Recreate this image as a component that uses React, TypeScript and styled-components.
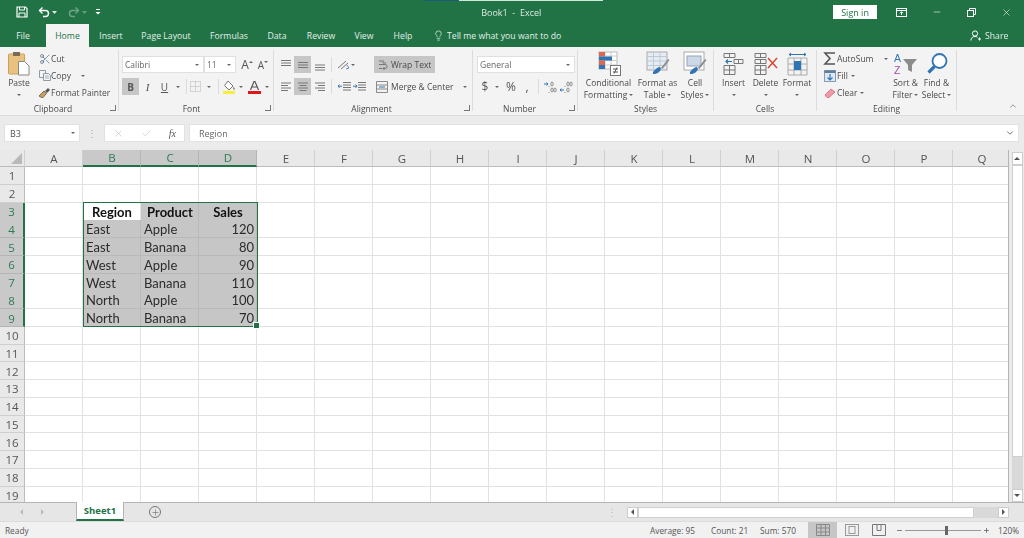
import React from 'react';
import styled, { createGlobalStyle } from 'styled-components';
import { Check, ChevronDown, ChevronUp, Lightbulb, Minus, Plus, Scissors, X } from 'lucide-react';

const GREEN = '#217346';
const INK = '#4a4a4a';
const COLUMNS = 'ABCDEFGHIJKLMNOPQ'.split('');
const ROWS = Array.from({ length: 19 }, (_, i) => i + 1);
const ROW_H = 17.75;

const CELLS: Record<number, [string, string, string]> = {
  3: ['Region', 'Product', 'Sales'],
  4: ['East', 'Apple', '120'],
  5: ['East', 'Banana', '80'],
  6: ['West', 'Apple', '90'],
  7: ['West', 'Banana', '110'],
  8: ['North', 'Apple', '100'],
  9: ['North', 'Banana', '70'],
};

const Global = createGlobalStyle`
  html, body { margin: 0; padding: 0; background: #e9e9e9; }
  body { font-family: "Open Sans", "Liberation Sans", sans-serif; overflow: hidden; }
  * { box-sizing: border-box; }
`;

const Window = styled.div`
  width: 1024px;
  height: 538px;
  display: flex;
  flex-direction: column;
  position: relative;
  overflow: hidden;
  filter: blur(0.45px);
`;

/* title bar */
const TitleBar = styled.header`
  height: 24px;
  background: ${GREEN};
  color: #fff;
  display: flex;
  align-items: center;
  padding-left: 15px;
  position: relative;
  flex: none;
`;
const LoadStrip = styled.i`
  position: absolute;
  left: 423px;
  top: 0;
  width: 180px;
  height: 1px;
  background: linear-gradient(90deg, #1d5d78 0 20%, #cfe8da 20%);
`;
const QuickSlot = styled.span<{ $w: number; $dim?: boolean }>`
  width: ${p => p.$w}px;
  height: 24px;
  display: inline-flex;
  align-items: center;
  justify-content: center;
  opacity: ${p => (p.$dim ? 0.35 : 1)};
`;
const QuickBar = styled.div`
  display: flex;
  align-items: center;
  width: 407px;
`;
const DocTitle = styled.div`
  width: 180px;
  text-align: center;
  font-size: 9px;
  color: #dcebe3;
`;
const SignIn = styled.button`
  margin-left: 232px;
  width: 44px;
  height: 14px;
  border: 0;
  padding: 0;
  background: #fff;
  color: ${GREEN};
  font: 9px "Open Sans", sans-serif;
`;
const WinControls = styled.div`
  display: flex;
  margin-left: 7px;
`;
const WinSlot = styled.span`
  width: 35px;
  height: 24px;
  display: inline-flex;
  align-items: center;
  justify-content: center;
`;

/* tabs */
const TabBar = styled.nav`
  height: 23px;
  background: ${GREEN};
  display: flex;
  align-items: stretch;
  flex: none;
`;
const Tab = styled.span<{ $w: number; $on?: boolean }>`
  width: ${p => p.$w}px;
  flex: none;
  display: inline-flex;
  align-items: center;
  justify-content: center;
  font-size: 8.7px;
  color: ${p => (p.$on ? GREEN : '#e4efe9')};
  background: ${p => (p.$on ? '#f3f3f3' : 'transparent')};
`;
const TellMe = styled.span`
  width: 537px;
  flex: none;
  display: inline-flex;
  align-items: center;
  gap: 3px;
  font-size: 8.7px;
  color: #e4efe9;
`;
const Share = styled.span`
  display: inline-flex;
  align-items: center;
  gap: 4px;
  font-size: 8.7px;
  color: #e4efe9;
`;

/* ribbon */
const Ribbon = styled.section`
  height: 69px;
  background: #f3f3f3;
  display: flex;
  flex: none;
  border-bottom: 1px solid #dcdcdc;
  position: relative;
`;
const GroupBox = styled.div<{ $w: number }>`
  width: ${p => p.$w}px;
  flex: none;
  display: flex;
  flex-direction: column;
  position: relative;
  &::after {
    content: '';
    position: absolute;
    right: 0;
    top: 3px;
    bottom: 4px;
    width: 1px;
    background: #dcdcdc;
  }
`;
const GroupBody = styled.div<{ $pad?: number; $col?: boolean; $top?: number }>`
  height: 55px;
  display: flex;
  flex-direction: ${p => (p.$col ? 'column' : 'row')};
  padding: ${p => p.$top ?? 3}px 0 0 ${p => p.$pad ?? 0}px;
  gap: ${p => (p.$col ? 5 : 0)}px;
`;
const GroupLabel = styled.div<{ $shift?: number }>`
  height: 13px;
  font-size: 8.5px;
  line-height: 13px;
  text-align: center;
  color: ${INK};
  padding-right: ${p => p.$shift ?? 1}px;
`;
const Launcher = styled.i`
  position: absolute;
  right: 3px;
  bottom: 4px;
  width: 6px;
  height: 6px;
  border-right: 1px solid #777;
  border-bottom: 1px solid #777;
`;
const ToolRow = styled.div`
  display: flex;
  align-items: center;
  height: 17px;
`;
const Slot = styled.span<{ $w: number; $on?: boolean; $text?: number; $lead?: number; $gap?: number }>`
  width: ${p => p.$w}px;
  height: 17px;
  flex: none;
  display: inline-flex;
  align-items: center;
  justify-content: ${p => (p.$lead !== undefined ? 'flex-start' : 'center')};
  padding-left: ${p => p.$lead ?? 0}px;
  gap: ${p => p.$gap ?? 0}px;
  background: ${p => (p.$on ? '#c6c6c6' : 'transparent')};
  color: ${p => (p.$lead !== undefined ? INK : '#555')};
  font-size: ${p => p.$text ?? 12}px;
  white-space: nowrap;
`;
const Divider = styled.i<{ $mx: number }>`
  width: 1px;
  height: 15px;
  background: #dcdcdc;
  margin: 0 ${p => p.$mx}px;
  flex: none;
`;
const Caret = styled.i<{ $up?: boolean; $rise?: number; $ml?: number }>`
  width: 0;
  height: 0;
  flex: none;
  border-left: 2.5px solid transparent;
  border-right: 2.5px solid transparent;
  border-top: 2.5px solid #666;
  display: inline-block;
  transform: ${p => (p.$up ? 'rotate(180deg)' : 'none')};
  margin-bottom: ${p => p.$rise ?? 0}px;
  margin-left: ${p => p.$ml ?? 0}px;
`;
const Combo = styled.div<{ $w: number }>`
  width: ${p => p.$w}px;
  height: 17px;
  flex: none;
  background: #fff;
  border: 1px solid #e0e0e0;
  font-size: 8.5px;
  color: #666;
  padding: 0 4px 0 2px;
  display: flex;
  align-items: center;
  justify-content: space-between;
`;
const SmallColumn = styled.div<{ $w?: number }>`
  display: flex;
  flex-direction: column;
  width: ${p => (p.$w ? `${p.$w}px` : 'auto')};
`;
const SmallTool = styled.div`
  height: 17px;
  display: flex;
  align-items: center;
  font-size: 8.5px;
  color: ${INK};
  white-space: nowrap;
`;
const SmallIcon = styled.span<{ $w: number }>`
  width: ${p => p.$w}px;
  flex: none;
  display: inline-flex;
  justify-content: center;
  align-items: center;
`;
const SmallText = styled.span<{ $w?: number }>`
  width: ${p => (p.$w ? `${p.$w}px` : 'auto')};
  margin-right: 3px;
  flex: none;
`;
const LargeTool = styled.div<{ $w: number }>`
  width: ${p => p.$w}px;
  flex: none;
  display: flex;
  flex-direction: column;
  align-items: center;
  font-size: 8.5px;
  line-height: 12px;
  color: ${INK};
  white-space: nowrap;
`;
const LargeIcon = styled.div`
  height: 27px;
  display: flex;
  align-items: center;
  justify-content: center;
`;
const LargeLine = styled.div`
  height: 12px;
  display: flex;
  align-items: center;
  justify-content: center;
  gap: 2px;
`;
const CollapseSlot = styled.span`
  margin-left: auto;
  width: 23px;
  display: flex;
  justify-content: center;
  align-items: flex-end;
  padding-bottom: 4px;
`;
const BoldMark = styled.span`
  font-weight: 700;
  font-size: 10px;
`;
const ItalicMark = styled.span`
  font: italic 11px "Liberation Serif", serif;
`;
const UnderMark = styled.span`
  font-size: 10px;
  text-decoration: underline;
`;

/* formula bar */
const FormulaBar = styled.div`
  height: 34px;
  background: #ebebeb;
  padding: 8px 5px 8px 4px;
  display: flex;
  align-items: stretch;
  flex: none;
`;
const NameBox = styled.div`
  width: 76px;
  background: #fff;
  border: 1px solid #e2e2e2;
  font-size: 9px;
  color: #555;
  padding: 0 4px 0 5px;
  display: flex;
  align-items: center;
  justify-content: space-between;
`;
const Grip = styled.i`
  width: 24px;
  display: flex;
  align-items: center;
  justify-content: center;
  color: #aaa;
  font: normal 10px "Open Sans", sans-serif;
`;
const FxButtons = styled.div`
  width: 81px;
  background: #fff;
  border: 1px solid #e2e2e2;
  display: flex;
  align-items: center;
  justify-content: space-between;
  padding: 0 8px;
`;
const Fx = styled.span`
  font: italic 10px "Liberation Serif", serif;
  color: #555;
`;
const FormulaInput = styled.div`
  flex: 1;
  margin-left: 4px;
  background: #fff;
  border: 1px solid #e2e2e2;
  font-size: 9px;
  color: #666;
  padding: 0 3px 0 9px;
  display: flex;
  align-items: center;
  justify-content: space-between;
`;

/* sheet */
const SheetArea = styled.main`
  height: 352px;
  display: flex;
  flex: none;
  background: #ebebeb;
`;
const Grid = styled.div`
  width: 1009px;
  height: 352px;
  overflow: hidden;
  position: relative;
  flex: none;
  border-right: 1px solid #b4b4b4;
`;
const HeaderRow = styled.div`
  display: grid;
  grid-template-columns: 25px repeat(17, 58px);
  height: 17px;
`;
const Corner = styled.div`
  background: #e9e9e9;
  border-right: 1px solid #cfcfcf;
  border-bottom: 1px solid #bcbcbc;
  position: relative;
  &::after {
    content: '';
    position: absolute;
    right: 2px;
    bottom: 2px;
    border-left: 11px solid transparent;
    border-bottom: 11px solid #b9b9b9;
  }
`;
const ColHead = styled.div<{ $on: boolean }>`
  display: flex;
  align-items: center;
  justify-content: center;
  padding-left: 1px;
  font-size: 11.5px;
  background: ${p => (p.$on ? '#c9c9c9' : '#e9e9e9')};
  color: ${p => (p.$on ? '#2f7a54' : '#555')};
  border-right: 1px solid ${p => (p.$on ? '#b5b5b5' : '#cfcfcf')};
  border-bottom: ${p => (p.$on ? `2px solid ${GREEN}` : '1px solid #bcbcbc')};
`;
const Row = styled.div`
  display: grid;
  grid-template-columns: 25px repeat(17, 58px);
  height: ${ROW_H}px;
`;
const RowHead = styled.div<{ $on: boolean }>`
  display: flex;
  align-items: center;
  justify-content: center;
  padding-top: 1px;
  font-size: 11.5px;
  background: ${p => (p.$on ? '#c9c9c9' : '#e9e9e9')};
  color: ${p => (p.$on ? '#2f7a54' : '#555')};
  border-bottom: 1px solid ${p => (p.$on ? '#b5b5b5' : '#cfcfcf')};
  border-right: ${p => (p.$on ? `2px solid ${GREEN}` : '1px solid #bcbcbc')};
`;
const Cell = styled.div<{ $sel?: boolean; $bold?: boolean; $align?: string }>`
  background: ${p => (p.$sel ? '#c6c6c6' : '#fff')};
  border-right: 1px solid ${p => (p.$sel ? '#b9b9b9' : '#e2e2e2')};
  border-bottom: 1px solid ${p => (p.$sel ? '#b9b9b9' : '#e2e2e2')};
  font: ${p => (p.$bold ? 700 : 400)} 13px "Lato", "Open Sans", sans-serif;
  color: ${p => (p.$bold ? '#111' : '#2b2b2b')};
  display: flex;
  align-items: center;
  justify-content: ${p => p.$align ?? 'flex-start'};
  padding: 1px 2px 0 3px;
  white-space: nowrap;
`;
const Selection = styled.div`
  position: absolute;
  left: 83px;
  top: ${17 + 2 * ROW_H - 0.5}px;
  width: 175px;
  height: ${7 * ROW_H + 1}px;
  border: 1.5px solid ${GREEN};
  pointer-events: none;
  &::after {
    content: '';
    position: absolute;
    right: -3px;
    bottom: -3px;
    width: 5px;
    height: 5px;
    background: ${GREEN};
    border: 1px solid #fff;
  }
`;
const VScroll = styled.aside`
  flex: 1;
  display: flex;
  flex-direction: column;
  align-items: center;
  padding: 2px 0 0 1px;
`;
const ScrollBtn = styled.div`
  width: 11px;
  height: 13px;
  background: #fff;
  border: 1px solid #ccc;
  display: flex;
  align-items: center;
  justify-content: center;
  flex: none;
`;
const VThumb = styled.div`
  width: 11px;
  height: 292px;
  background: #fff;
  border: 1px solid #d0d0d0;
  flex: none;
`;
const VRest = styled.div`
  width: 11px;
  flex: 1;
  background: #d9d9d9;
`;
const ArrowUp = styled.i`
  border-left: 3px solid transparent;
  border-right: 3px solid transparent;
  border-bottom: 3px solid #555;
`;
const ArrowDown = styled.i`
  border-left: 3px solid transparent;
  border-right: 3px solid transparent;
  border-top: 3px solid #555;
`;
const ArrowLeft = styled.i<{ $c?: string }>`
  border-top: 3px solid transparent;
  border-bottom: 3px solid transparent;
  border-right: 3px solid ${p => p.$c ?? '#555'};
`;
const ArrowRight = styled.i<{ $c?: string }>`
  border-top: 3px solid transparent;
  border-bottom: 3px solid transparent;
  border-left: 3px solid ${p => p.$c ?? '#555'};
`;

/* sheet tabs */
const SheetTabs = styled.div`
  height: 19px;
  flex: none;
  background: #e6e6e6;
  border-top: 1px solid #b4b4b4;
  display: flex;
  align-items: stretch;
`;
const TabNav = styled.div`
  width: 76px;
  flex: none;
  display: flex;
  align-items: center;
  padding-left: 20px;
  gap: 18px;
`;
const SheetTab = styled.div`
  width: 48px;
  flex: none;
  margin-top: -1px;
  background: #fff;
  border-left: 1px solid #b4b4b4;
  border-right: 1px solid #b4b4b4;
  border-bottom: 2px solid ${GREEN};
  color: ${GREEN};
  font-size: 9.5px;
  font-weight: 700;
  display: flex;
  align-items: center;
  justify-content: center;
`;
const AddSheet = styled.span`
  width: 62px;
  flex: none;
  display: flex;
  align-items: center;
  justify-content: center;
`;
const AddRing = styled.span`
  width: 12px;
  height: 12px;
  border: 1px solid #777;
  border-radius: 50%;
  display: flex;
  align-items: center;
  justify-content: center;
`;
const SplitDots = styled.span`
  width: 441px;
  flex: none;
  color: #bbb;
  font-size: 10px;
  display: flex;
  align-items: center;
  justify-content: flex-end;
  padding-right: 10px;
`;
const HScroll = styled.div`
  display: flex;
  align-items: center;
  width: 382px;
  flex: none;
`;
const HButton = styled.div`
  width: 11px;
  height: 11px;
  background: #fff;
  border: 1px solid #ccc;
  display: flex;
  align-items: center;
  justify-content: center;
  flex: none;
`;
const HThumb = styled.div`
  width: 336px;
  height: 11px;
  background: #fff;
  border: 1px solid #d0d0d0;
  flex: none;
`;
const HRest = styled.div`
  flex: 1;
  height: 11px;
  background: #d9d9d9;
`;

/* status bar */
const StatusBar = styled.footer`
  flex: 1;
  background: #f1f1f1;
  border-top: 1px solid #dcdcdc;
  display: flex;
  align-items: stretch;
  font-size: 8.3px;
  color: #555;
`;
const Ready = styled.span`
  width: 650px;
  flex: none;
  padding-left: 5px;
  display: flex;
  align-items: center;
`;
const Stat = styled.span<{ $w: number }>`
  width: ${p => p.$w}px;
  flex: none;
  display: flex;
  align-items: center;
  white-space: nowrap;
`;
const ViewBtn = styled.span<{ $w: number; $on?: boolean }>`
  width: ${p => p.$w}px;
  flex: none;
  display: flex;
  align-items: center;
  justify-content: center;
  background: ${p => (p.$on ? '#c6c6c6' : 'transparent')};
`;
const Zoom = styled.div`
  width: 94px;
  margin-left: 5px;
  flex: none;
  display: flex;
  align-items: center;
  gap: 2px;
`;
const ZoomTrack = styled.div`
  width: 76px;
  height: 1px;
  background: #999;
  position: relative;
  flex: none;
`;
const ZoomThumb = styled.i`
  position: absolute;
  left: 40px;
  top: -4px;
  width: 3px;
  height: 9px;
  background: #666;
`;
const ZoomValue = styled.span`
  margin-left: 8px;
  display: flex;
  align-items: center;
`;

/* icons */
const Svg: React.FC<{ w: number; h?: number; children: React.ReactNode }> = ({ w, h, children }) => (
  <svg width={w} height={h ?? w} viewBox={`0 0 ${w} ${h ?? w}`} fill="none">
    {children}
  </svg>
);

const SaveIcon = () => (
  <Svg w={12}>
    <path d="M1 1h8.5L11 2.5V11H1z" stroke="#fff" strokeWidth="1.2" />
    <path d="M3.5 1v3h5V1M3 11V7h6v4" stroke="#fff" />
  </Svg>
);
const UndoIcon = ({ flip }: { flip?: boolean }) => (
  <Svg w={12}>
    <g transform={flip ? 'matrix(-1 0 0 1 12 0)' : undefined}>
      <path d="M1.5 4.5h6a3 3 0 0 1 0 6H5" stroke="#fff" strokeWidth="1.4" />
      <path d="M4.5 1.5l-3 3 3 3" stroke="#fff" strokeWidth="1.4" />
    </g>
  </Svg>
);
const WhiteCaret = () => (
  <Svg w={5} h={3}>
    <path d="M0 0h5L2.5 3z" fill="#dcebe3" />
  </Svg>
);
const CustomizeIcon = () => (
  <Svg w={6} h={6}>
    <path d="M1 0.5h4" stroke="#fff" />
    <path d="M0.5 3h5L3 5.5z" fill="#fff" />
  </Svg>
);
const DisplayIcon = () => (
  <Svg w={11} h={9}>
    <rect x="0.5" y="0.5" width="10" height="8" stroke="#fff" />
    <path d="M0.5 2.5h10M5.5 7V4M4 5.2l1.5-1.5L7 5.2" stroke="#fff" />
  </Svg>
);
const RestoreIcon = () => (
  <Svg w={9}>
    <path d="M2.5 2V.5h6v6H7" stroke="#fff" />
    <rect x="0.5" y="2.5" width="6" height="6" stroke="#fff" />
  </Svg>
);
const ShareIcon = () => (
  <Svg w={11}>
    <circle cx="5" cy="3.5" r="2.6" stroke="#fff" />
    <path d="M.8 10.5c.4-3 2-4 4.2-4 1 0 1.8.2 2.5.7M8 9h3M9.5 7.5v3" stroke="#fff" />
  </Svg>
);
const PasteIcon = () => (
  <Svg w={22} h={25}>
    <rect x="0.5" y="3" width="16" height="20" rx="1" fill="#e9c27f" stroke="#c9a15c" />
    <rect x="5" y="1" width="7" height="4" fill="#7a6a55" />
    <path d="M10.5 10.5h6l4.5 4.5v9H10.5z" fill="#fff" stroke="#888" />
  </Svg>
);
const CopyIcon = () => (
  <Svg w={12} h={11}>
    <path d="M.5.5h6v7h-6z" fill="#f5f5f5" stroke="#8f9aa5" />
    <path d="M4.5 3.5h5l2 2v5h-7z" fill="#f5f5f5" stroke="#8f9aa5" />
    <path d="M6 6h4M6 8h4" stroke="#9bb0c4" />
  </Svg>
);
const PainterIcon = () => (
  <Svg w={13} h={11}>
    <path d="M1 9l5-5 2.5 2.5-4 4.5z" fill="#c9a15c" stroke="#7a6a55" />
    <path d="M7 4l3-3 2 2-3 3z" fill="#555" />
  </Svg>
);
const BorderIcon = () => (
  <Svg w={11}>
    <path d="M.5.5h10v10H.5zM5.5.5v10M.5 5.5h10" stroke="#b5b5b5" strokeDasharray="1 1" />
  </Svg>
);
const FillIcon = () => (
  <Svg w={13} h={14}>
    <path d="M5 1l5 5-4 4-4.5-4.5z" fill="#fff" stroke="#777" />
    <path d="M10.5 6.5c1 1.5 1.6 2 1.2 3-.4.6-1.4.4-1.5-.4z" fill="#777" />
    <rect x="0" y="11" width="12" height="3" fill="#f7ee3a" />
  </Svg>
);
const FontColorIcon = () => (
  <Svg w={13} h={14}>
    <path d="M2.5 10L6 1.5h1L10.5 10M4 7h5" stroke="#555" strokeWidth="1.2" />
    <rect x="0" y="11" width="13" height="3" fill="#e0161b" />
  </Svg>
);
const AlignLines: React.FC<{ mode: 'top' | 'mid' | 'bot' | 'left' | 'center' | 'right' }> = ({ mode }) => {
  const d = {
    top: 'M1 1.5h10M1 4h10M1 6.5h10',
    mid: 'M1 3.5h10M1 6h10M1 8.5h10',
    bot: 'M1 6h10M1 8.5h10M1 11h10',
    left: 'M1 2h10M1 4.5h7M1 7h10M1 9.5h7',
    center: 'M1 2h10M2.5 4.5h7M1 7h10M2.5 9.5h7',
    right: 'M1 2h10M4 4.5h7M1 7h10M4 9.5h7',
  }[mode];
  return (
    <Svg w={12}>
      <path d={d} stroke="#777" />
    </Svg>
  );
};
const OrientIcon = () => (
  <Svg w={13} h={11}>
    <path d="M1 9l8-7M4 10l7-6" stroke="#777" />
    <path d="M10 6l2 3-3 1" stroke="#5b8fc7" />
  </Svg>
);
const IndentIcon = ({ back }: { back?: boolean }) => (
  <Svg w={13} h={11}>
    <path d="M5 1.5h8M5 4h8M5 6.5h8M5 9h8" stroke="#777" />
    <path d={back ? 'M4 5.2H0M1.5 3.5L0 5.2l1.5 1.7' : 'M0 5.2h4M2.5 3.5L4 5.2 2.5 6.9'} stroke="#2f75b5" />
  </Svg>
);
const WrapIcon = () => (
  <Svg w={10} h={12}>
    <path d="M1 2h3M1 9.5h3M1 5.5h6a2 2 0 0 1 0 4H5M6.5 8L5 9.5 6.5 11" stroke="#777" />
    <path d="M5 1v3h3" stroke="#777" />
  </Svg>
);
const MergeIcon = () => (
  <Svg w={12}>
    <path d="M.5.5h11v11H.5zM.5 4h11M.5 8h11" stroke="#8a8a8a" />
    <path d="M3 6h6" stroke="#2f75b5" />
  </Svg>
);
// decimal places: drawn as dots and zeros, an icon not a label
const DecimalIcon = ({ dec }: { dec?: boolean }) => (
  <Svg w={13} h={12}>
    <g stroke="#777" strokeWidth="0.8">
      <ellipse cx="8" cy="3" rx="1.2" ry="2" />
      {dec && <ellipse cx="11" cy="3" rx="1.2" ry="2" />}
      <ellipse cx="8" cy="9" rx="1.2" ry="2" />
      {!dec && <ellipse cx="11" cy="9" rx="1.2" ry="2" />}
    </g>
    <path d="M5 5v.8M5 11v.8" stroke="#777" />
    <path d={dec ? 'M0 9h4M1.5 7.5L0 9l1.5 1.5' : 'M0 3h4M2.5 1.5L4 3 2.5 4.5'} stroke="#2f75b5" />
  </Svg>
);
const CondIcon = () => (
  <Svg w={24} h={25}>
    <rect x="2" y="1" width="18" height="17" fill="#fff" stroke="#bbb" />
    <path d="M2 5h18M2 9.5h18M2 14h18M8 1v17M14 1v17" stroke="#ccc" />
    <rect x="2" y="1" width="6" height="4.5" fill="#d9694f" />
    <rect x="2" y="5.5" width="13" height="4" fill="#2f75b5" />
    <rect x="2" y="9.5" width="6" height="4.5" fill="#d9694f" />
    <rect x="2" y="14" width="6" height="4" fill="#2f75b5" />
    <rect x="13.5" y="14.5" width="10" height="10" fill="#fff" stroke="#777" />
    <path d="M16 18h5M16 21h5M20 16.5l-3 6" stroke="#555" />
  </Svg>
);
const TableIcon = () => (
  <Svg w={24} h={25}>
    <rect x="1" y="1" width="20" height="18" fill="#e4ecf5" stroke="#aaa" />
    <path d="M1 5.5h20M1 10h20M1 14.5h20M7.5 1v18M14 1v18" stroke="#c0c8d2" />
    <path d="M7 21c2-3 5-5 7-5l1 2c-1 3-4 5-8 5z" fill="#2f75b5" />
    <path d="M15 17l7-9 1.5 1-7 9z" fill="#8a8a8a" />
  </Svg>
);
const CellStyleIcon = () => (
  <Svg w={24} h={25}>
    <rect x="1" y="1" width="20" height="18" fill="#fff" stroke="#aaa" />
    <rect x="4" y="5" width="14" height="10" fill="#cfd8e6" stroke="#8fa2bb" />
    <path d="M7 21c2-3 5-5 7-5l1 2c-1 3-4 5-8 5z" fill="#2f75b5" />
    <path d="M15 17l7-9 1.5 1-7 9z" fill="#8a8a8a" />
  </Svg>
);
const CellGrid = () => <path d="M1 13.5h11v9H1zM1 18h11M6.5 13.5v9" stroke="#777" />;
const InsertIcon = () => (
  <Svg w={22} h={24}>
    <CellGrid />
    <path d="M1 1.5h11v4H1zM6.5 1.5v4" stroke="#777" />
    <path d="M11 7.5h9v4h-9zM15.5 7.5v4" stroke="#777" />
    <path d="M9 9.5H3M5 7.5l-2 2 2 2" stroke="#2f75b5" strokeWidth="1.2" />
  </Svg>
);
const DeleteIcon = () => (
  <Svg w={24} h={24}>
    <CellGrid />
    <path d="M1 1.5h11v4H1zM6.5 1.5v4M1 7.5h11v4H1zM6.5 7.5v4" stroke="#777" />
    <path d="M14 6l9 10M23 6l-9 10" stroke="#d8432e" strokeWidth="1.4" />
  </Svg>
);
const FormatIcon = () => (
  <Svg w={23} h={24}>
    <path d="M2 6h19v17H2zM8 6v17M15 6v17M2 12h19M2 18h19" stroke="#aaa" />
    <rect x="8" y="9" width="7" height="9" fill="#2f75b5" />
    <path d="M3 2.5h17M5 1l-2 1.5L5 4M18 1l2 1.5L18 4" stroke="#2f75b5" />
  </Svg>
);
const SigmaIcon = () => (
  <Svg w={13}>
    <path d="M12 1H2l5 5.5L2 12h10" stroke="#555" strokeWidth="1.6" />
  </Svg>
);
const FillDownIcon = () => (
  <Svg w={12}>
    <rect x="0.5" y="0.5" width="11" height="11" fill="#dfe9f5" stroke="#8a9bb0" />
    <rect x="0.5" y="0.5" width="11" height="2.5" fill="#5f7f9f" />
    <path d="M6 4v6M3.5 7.5L6 10l2.5-2.5" stroke="#2f75b5" strokeWidth="1.2" />
  </Svg>
);
const EraserIcon = () => (
  <Svg w={12} h={10}>
    <path d="M1 7l6-6 4 3-6 5.5H3z" fill="#ee9aa6" stroke="#db7d8c" />
  </Svg>
);
const SortIcon = () => (
  <Svg w={26} h={24}>
    <text x="1" y="10" fontSize="10.5" fill="#2f75b5" fontFamily="Liberation Sans">A</text>
    <text x="1" y="22" fontSize="10.5" fill="#a64ca6" fontFamily="Liberation Sans">Z</text>
    <path d="M10 7h14l-5 6v7l-4-2v-5z" fill="#8c8c8c" />
  </Svg>
);
const FindIcon = () => (
  <Svg w={22} h={24}>
    <circle cx="13.5" cy="9" r="7" stroke="#2f75b5" strokeWidth="1.8" fill="#fff" />
    <path d="M8.5 14.5l-6 6" stroke="#2f75b5" strokeWidth="3.2" />
  </Svg>
);
const NormalViewIcon = () => (
  <Svg w={14} h={12}>
    <path d="M.5.5h13v11H.5zM.5 4h13M.5 8h13M5 .5v11M9.5 .5v11" stroke="#888" />
  </Svg>
);
const PageViewIcon = () => (
  <Svg w={14} h={12}>
    <rect x="0.5" y="0.5" width="13" height="11" stroke="#999" />
    <rect x="4" y="2.5" width="6" height="7" stroke="#999" />
  </Svg>
);
const BreakViewIcon = () => (
  <Svg w={14} h={12}>
    <path d="M.5 .5h13v11H.5zM5 .5v6h4v-6" stroke="#777" />
  </Svg>
);

const Group: React.FC<{ w: number; label: string; launcher?: boolean; pad?: number; col?: boolean; top?: number; shift?: number; children: React.ReactNode }> = ({ w, label, launcher, pad, col, top, shift, children }) => (
  <GroupBox $w={w}>
    <GroupBody $pad={pad} $col={col} $top={top}>{children}</GroupBody>
    <GroupLabel $shift={shift}>{label}</GroupLabel>
    {launcher && <Launcher />}
  </GroupBox>
);

const Large: React.FC<{ w: number; icon: React.ReactNode; lines: string[]; caretLine?: number }> = ({ w, icon, lines, caretLine }) => (
  <LargeTool $w={w}>
    <LargeIcon>{icon}</LargeIcon>
    {lines.map((l, i) => (
      <LargeLine key={i}>
        {l}
        {caretLine === i && <Caret />}
      </LargeLine>
    ))}
    {caretLine === lines.length && <LargeLine><Caret /></LargeLine>}
  </LargeTool>
);

export default function App() {
  return (
    <Window>
      <Global />
      <TitleBar>
        <LoadStrip />
        <QuickBar>
          <QuickSlot $w={13}><SaveIcon /></QuickSlot>
          <QuickSlot $w={9} />
          <QuickSlot $w={13}><UndoIcon /></QuickSlot>
          <QuickSlot $w={9}><WhiteCaret /></QuickSlot>
          <QuickSlot $w={8} />
          <QuickSlot $w={13} $dim><UndoIcon flip /></QuickSlot>
          <QuickSlot $w={9} $dim><WhiteCaret /></QuickSlot>
          <QuickSlot $w={4} />
          <QuickSlot $w={10}><CustomizeIcon /></QuickSlot>
        </QuickBar>
        <DocTitle>Book1&nbsp; -&nbsp; Excel</DocTitle>
        <SignIn>Sign in</SignIn>
        <WinControls>
          <WinSlot><DisplayIcon /></WinSlot>
          <WinSlot><Minus size={10} color="#fff" strokeWidth={1.4} /></WinSlot>
          <WinSlot><RestoreIcon /></WinSlot>
          <WinSlot><X size={11} color="#fff" strokeWidth={1.2} /></WinSlot>
        </WinControls>
      </TitleBar>

      <TabBar>
        <Tab $w={46}>File</Tab>
        <Tab $w={43} $on>Home</Tab>
        <Tab $w={44}>Insert</Tab>
        <Tab $w={66}>Page Layout</Tab>
        <Tab $w={60}>Formulas</Tab>
        <Tab $w={36}>Data</Tab>
        <Tab $w={52}>Review</Tab>
        <Tab $w={34}>View</Tab>
        <Tab $w={44}>Help</Tab>
        <Tab $w={8} />
        <TellMe>
          <Lightbulb size={11} color="#fff" strokeWidth={1.4} />
          Tell me what you want to do
        </TellMe>
        <Share><ShareIcon />Share</Share>
      </TabBar>

      <Ribbon>
        <Group w={119} label="Clipboard" launcher shift={13}>
          <Large w={38} icon={<PasteIcon />} lines={['Paste']} caretLine={1} />
          <SmallColumn>
            <SmallTool>
              <SmallIcon $w={13}><Scissors size={12} color="#44617f" strokeWidth={1.3} /></SmallIcon>
              Cut
            </SmallTool>
            <SmallTool>
              <SmallIcon $w={13}><CopyIcon /></SmallIcon>
              <SmallText $w={27}>Copy</SmallText>
              <Caret />
            </SmallTool>
            <SmallTool>
              <SmallIcon $w={13}><PainterIcon /></SmallIcon>
              Format Painter
            </SmallTool>
          </SmallColumn>
        </Group>

        <Group w={155} label="Font" launcher pad={3} col top={9} shift={10}>
          <ToolRow>
            <Combo $w={82}>Calibri<Caret /></Combo>
            <Combo $w={32}>11<Caret /></Combo>
            <Slot $w={22}>A<Caret $up $rise={6} /></Slot>
            <Slot $w={10} $text={10}>A<Caret $rise={6} /></Slot>
          </ToolRow>
          <ToolRow>
            <Slot $w={17} $on><BoldMark>B</BoldMark></Slot>
            <Slot $w={17}><ItalicMark>I</ItalicMark></Slot>
            <Slot $w={17}><UnderMark>U</UnderMark></Slot>
            <Slot $w={10}><Caret /></Slot>
            <Divider $mx={3} />
            <Slot $w={11}><BorderIcon /></Slot>
            <Slot $w={16}><Caret /></Slot>
            <Divider $mx={1} />
            <Slot $w={18}><FillIcon /></Slot>
            <Slot $w={6}><Caret /></Slot>
            <Slot $w={20}><FontColorIcon /></Slot>
            <Slot $w={6}><Caret /></Slot>
          </ToolRow>
        </Group>

        <Group w={199} label="Alignment" launcher pad={3} col top={9} shift={4}>
          <ToolRow>
            <Slot $w={17}><AlignLines mode="top" /></Slot>
            <Slot $w={17} $on><AlignLines mode="mid" /></Slot>
            <Slot $w={17}><AlignLines mode="bot" /></Slot>
            <Divider $mx={3} />
            <Slot $w={16}><OrientIcon /></Slot>
            <Slot $w={4}><Caret /></Slot>
            <Slot $w={19} />
            <Slot $w={61} $on $text={8.5} $lead={4} $gap={3}><WrapIcon />Wrap Text</Slot>
          </ToolRow>
          <ToolRow>
            <Slot $w={17}><AlignLines mode="left" /></Slot>
            <Slot $w={17} $on><AlignLines mode="center" /></Slot>
            <Slot $w={17}><AlignLines mode="right" /></Slot>
            <Divider $mx={3} />
            <Slot $w={2} />
            <Slot $w={15}><IndentIcon back /></Slot>
            <Slot $w={15}><IndentIcon /></Slot>
            <Slot $w={8} />
            <Slot $w={92} $text={8.5} $lead={1} $gap={3}>
              <MergeIcon />Merge &amp; Center<Caret $ml={6} />
            </Slot>
          </ToolRow>
        </Group>

        <Group w={105} label="Number" launcher pad={4} col top={9} shift={12}>
          <ToolRow>
            <Combo $w={98}>General<Caret /></Combo>
          </ToolRow>
          <ToolRow>
            <Slot $w={16}>$</Slot>
            <Slot $w={8}><Caret /></Slot>
            <Slot $w={20}>%</Slot>
            <Slot $w={12}>,</Slot>
            <Divider $mx={5} />
            <Slot $w={13}><DecimalIcon /></Slot>
            <Slot $w={3} />
            <Slot $w={13}><DecimalIcon dec /></Slot>
          </ToolRow>
        </Group>

        <Group w={136} label="Styles" pad={3}>
          <Large w={55} icon={<CondIcon />} lines={['Conditional', 'Formatting']} caretLine={1} />
          <Large w={43} icon={<TableIcon />} lines={['Format as', 'Table']} caretLine={1} />
          <Large w={32} icon={<CellStyleIcon />} lines={['Cell', 'Styles']} caretLine={1} />
        </Group>

        <Group w={103} label="Cells" pad={3}>
          <Large w={33} icon={<InsertIcon />} lines={['Insert']} caretLine={1} />
          <Large w={31} icon={<DeleteIcon />} lines={['Delete']} caretLine={1} />
          <Large w={32} icon={<FormatIcon />} lines={['Format']} caretLine={1} />
        </Group>

        <Group w={140} label="Editing" pad={5}>
          <SmallColumn $w={68}>
            <SmallTool>
              <SmallIcon $w={15}><SigmaIcon /></SmallIcon>
              <SmallText $w={44}>AutoSum</SmallText>
              <Caret />
            </SmallTool>
            <SmallTool>
              <SmallIcon $w={15}><FillDownIcon /></SmallIcon>
              <SmallText>Fill</SmallText>
              <Caret />
            </SmallTool>
            <SmallTool>
              <SmallIcon $w={15}><EraserIcon /></SmallIcon>
              <SmallText>Clear</SmallText>
              <Caret />
            </SmallTool>
          </SmallColumn>
          <Large w={31} icon={<SortIcon />} lines={['Sort &', 'Filter']} caretLine={1} />
          <Large w={31} icon={<FindIcon />} lines={['Find &', 'Select']} caretLine={1} />
        </Group>

        <CollapseSlot><ChevronUp size={10} color="#666" strokeWidth={1.6} /></CollapseSlot>
      </Ribbon>

      <FormulaBar>
        <NameBox>B3<Caret /></NameBox>
        <Grip>⋮</Grip>
        <FxButtons>
          <X size={11} color="#bbb" strokeWidth={1.3} />
          <Check size={11} color="#bbb" strokeWidth={1.3} />
          <Fx>fx</Fx>
        </FxButtons>
        <FormulaInput>Region<ChevronDown size={10} color="#555" strokeWidth={2} /></FormulaInput>
      </FormulaBar>

      <SheetArea>
        <Grid>
          <HeaderRow>
            <Corner />
            {COLUMNS.map(c => (
              <ColHead key={c} $on={c === 'B' || c === 'C' || c === 'D'}>{c}</ColHead>
            ))}
          </HeaderRow>
          {ROWS.map(r => {
            const values = CELLS[r];
            return (
              <Row key={r}>
                <RowHead $on={!!values}>{r}</RowHead>
                {COLUMNS.map((c, i) => {
                  const idx = i - 1;
                  const inData = !!values && idx >= 0 && idx <= 2;
                  const isHeader = r === 3;
                  return (
                    <Cell
                      key={c}
                      $sel={inData && !(r === 3 && idx === 0)}
                      $bold={inData && isHeader}
                      $align={inData && isHeader ? 'center' : inData && idx === 2 ? 'flex-end' : undefined}
                    >
                      {inData ? values[idx] : ''}
                    </Cell>
                  );
                })}
              </Row>
            );
          })}
          <Selection />
        </Grid>
        <VScroll>
          <ScrollBtn><ArrowUp /></ScrollBtn>
          <VThumb />
          <VRest />
          <ScrollBtn><ArrowDown /></ScrollBtn>
        </VScroll>
      </SheetArea>

      <SheetTabs>
        <TabNav>
          <ArrowLeft $c="#bbb" />
          <ArrowRight $c="#bbb" />
        </TabNav>
        <SheetTab>Sheet1</SheetTab>
        <AddSheet>
          <AddRing><Plus size={9} color="#666" strokeWidth={1.6} /></AddRing>
        </AddSheet>
        <SplitDots>⋮</SplitDots>
        <HScroll>
          <HButton><ArrowLeft /></HButton>
          <HThumb />
          <HRest />
          <HButton><ArrowRight /></HButton>
        </HScroll>
      </SheetTabs>

      <StatusBar>
        <Ready>Ready</Ready>
        <Stat $w={61}>Average: 95</Stat>
        <Stat $w={49}>Count: 21</Stat>
        <Stat $w={48}>Sum: 570</Stat>
        <ViewBtn $w={29} $on><NormalViewIcon /></ViewBtn>
        <ViewBtn $w={29}><PageViewIcon /></ViewBtn>
        <ViewBtn $w={25}><BreakViewIcon /></ViewBtn>
        <Zoom>
          <Minus size={7} color="#555" strokeWidth={2.5} />
          <ZoomTrack><ZoomThumb /></ZoomTrack>
          <Plus size={7} color="#555" strokeWidth={2.5} />
        </Zoom>
        <ZoomValue>120%</ZoomValue>
      </StatusBar>
    </Window>
  );
}
